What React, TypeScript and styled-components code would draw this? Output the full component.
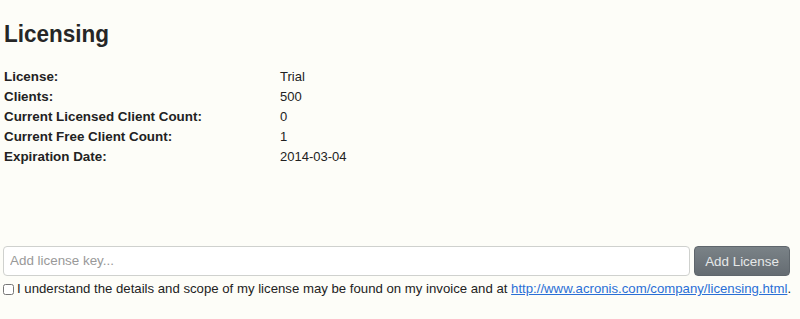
import React from "react";
import styled, { createGlobalStyle } from "styled-components";

const Global = createGlobalStyle`
  html, body { margin: 0; padding: 0; background: #fdfdf8; }
  body { font-family: "Liberation Sans", Arial, sans-serif; font-size: 13px; color: #222; }
`;

const Page = styled.div`
  padding: 0 10px 0 4px;
  height: 319px;
  box-sizing: border-box;
  display: flex;
  flex-direction: column;
`;

const Title = styled.h1`
  margin: 20px 0 19px;
  font-size: 22.5px;
  line-height: 28px;
  font-weight: bold;
  color: #262626;
  transform: scaleY(1.08);
  transform-origin: left center;
`;

const InfoGrid = styled.div`
  display: grid;
  grid-template-columns: 276px 1fr;
  line-height: 20px;
  font-size: 13.4px;
`;

const Label = styled.div`
  font-weight: bold;
  color: #222;
`;

const Value = styled.div`
  color: #222;
  font-size: 13px;
`;

const Form = styled.div`
  margin-top: auto;
  margin-bottom: 22px;
  margin-left: -1px;
`;

const InputRow = styled.div`
  display: flex;
  gap: 4px;
  align-items: center;
`;

const KeyInput = styled.input`
  flex: 1;
  height: 30px;
  box-sizing: border-box;
  border: 1px solid #cfd1ce;
  border-radius: 4px;
  background: #fff;
  padding: 4px 6px;
  font-family: "Liberation Sans", Arial, sans-serif;
  font-size: 13.4px;
  color: #333;
  &::placeholder { color: #999; }
`;

const Button = styled.button`
  width: 96px;
  height: 30px;
  margin-top: 1px;
  border: 1px solid #5f666c;
  border-radius: 4px;
  background: linear-gradient(#7a8287, #656c72);
  color: #e6e8e8;
  font-family: "Liberation Sans", Arial, sans-serif;
  font-size: 13.4px;
  padding: 0;
`;

const AgreeRow = styled.label`
  display: flex;
  align-items: center;
  gap: 3px;
  margin-top: 5px;
  line-height: 16px;
  font-size: 13.2px;
  color: #222;
  white-space: nowrap;
`;

const Check = styled.input`
  margin: 0;
  width: 11px;
  height: 11px;
  flex: none;
`;

const Link = styled.a`
  color: #2a6fd6;
  text-decoration: underline;
`;

const rows: [string, string][] = [
  ["License:", "Trial"],
  ["Clients:", "500"],
  ["Current Licensed Client Count:", "0"],
  ["Current Free Client Count:", "1"],
  ["Expiration Date:", "2014-03-04"],
];

export default function App() {
  return (
    <>
      <Global />
      <Page>
        <Title>Licensing</Title>
        <InfoGrid>
          {rows.map(([l, v]) => (
            <React.Fragment key={l}>
              <Label>{l}</Label>
              <Value>{v}</Value>
            </React.Fragment>
          ))}
        </InfoGrid>
        <Form>
          <InputRow>
            <KeyInput placeholder="Add license key..." />
            <Button>Add License</Button>
          </InputRow>
          <AgreeRow>
            <Check type="checkbox" />
            <span>
              I understand the details and scope of my license may be found on my invoice and at{" "}
              <Link href="#">http://www.acronis.com/company/licensing.html</Link>.
            </span>
          </AgreeRow>
        </Form>
      </Page>
    </>
  );
}
